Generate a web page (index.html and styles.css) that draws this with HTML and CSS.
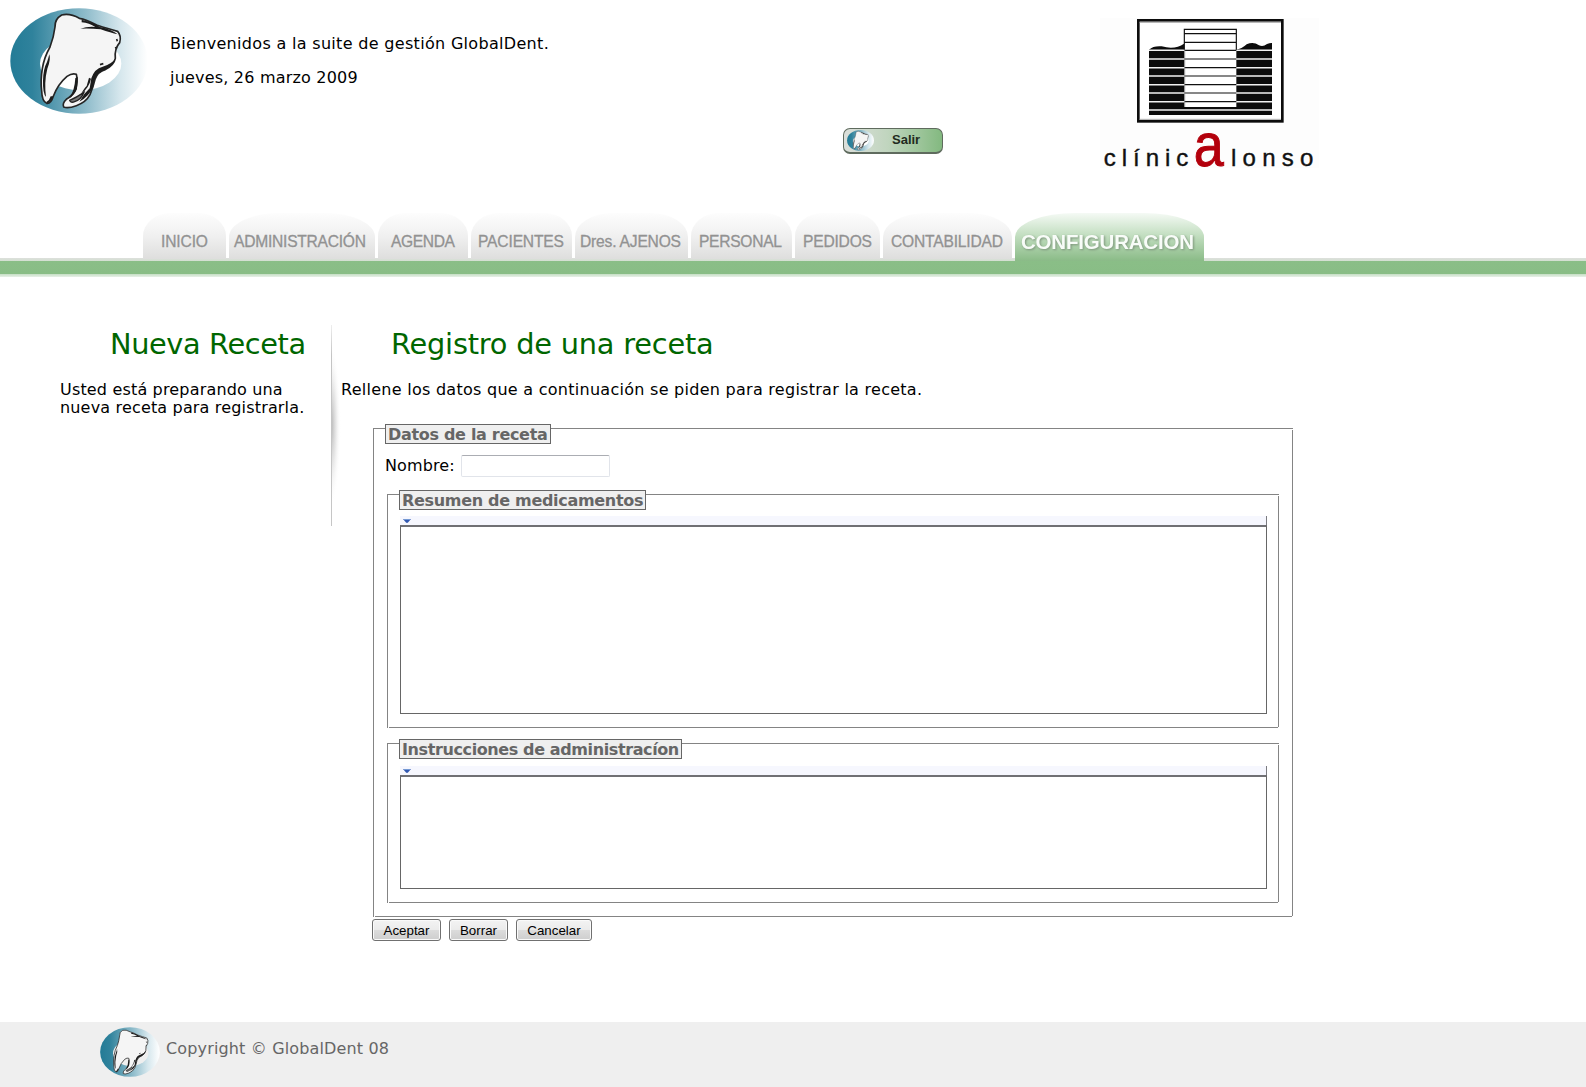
FILE: index.html
```html
<!DOCTYPE html>
<html lang="es">
<head>
<meta charset="utf-8">
<title>GlobalDent - Nueva Receta</title>
<link rel="stylesheet" href="styles.css">
</head>
<body>
<svg class="defs" width="0" height="0" aria-hidden="true">
  <defs>
    <linearGradient id="teal" x1="0" x2="1"><stop offset="0" stop-color="#237b96"/><stop offset=".16" stop-color="#2f829c"/><stop offset=".55" stop-color="#8fbccb"/><stop offset=".8" stop-color="#d6e7ed"/><stop offset="1" stop-color="#fff"/></linearGradient>
    <symbol id="tooth" viewBox="30 23 414 318" preserveAspectRatio="none">
      <ellipse cx="237" cy="182" rx="206" ry="158" fill="url(#teal)"/>
      <ellipse class="hole" cx="242" cy="190" rx="122" ry="80"/>
      <path d="M185 44Q164 56 165 80Q161 112 150 140Q132 172 127 205Q121 240 125 272Q126 303 140 309Q153 311 160 288Q173 252 201 228Q217 217 229 222Q235 244 226 269Q215 288 199 297Q186 309 191 320Q204 325 229 316Q258 306 270 283Q280 259 285 237Q292 214 317 207Q342 194 346 174Q343 145 359 127Q365 107 353 93Q326 86 290 74Q258 57 238 54Q210 38 185 44Z" fill="#f5f5f5" stroke="#252525" stroke-width="5" stroke-linejoin="round"/>
      <path d="M148 162Q153 178 142 205Q132 245 138 290Q128 280 129 240Q130 205 141 185Q145 175 148 162ZM160 288Q155 303 142 309L139 305Q149 300 152 288ZM245 58Q285 68 300 80Q335 87 353 102Q333 98 302 87Q267 83 241 85Q262 78 286 80Q268 68 245 66ZM346 174Q339 203 303 214Q284 222 279 260Q268 288 238 304Q250 281 269 264L274 234Q283 205 308 199Q338 190 346 174ZM267 232L273 235Q268 261 243 281Q253 263 260 257ZM233 230L231 266Q223 285 208 294Q224 271 226 233Z" fill="#1c1c1c"/>
      <path d="M209 300Q228 292 252 276Q244 298 224 304Q212 309 209 300Z" fill="#777" stroke="#222" stroke-width="4"/>
      <path d="M350 116L352 123M300 193L310 190M345 143L351 141" stroke="#222" stroke-width="5"/>
    </symbol>
  </defs>
</svg>

<header class="header">
  <svg class="brand"><use href="#tooth"/></svg>
  <div class="welcome">
    <p class="greeting">Bienvenidos a la suite de gestión GlobalDent.</p>
    <p class="date">jueves, 26 marzo 2009</p>
  </div>
  <a class="exit" href="#"><svg><use href="#tooth"/></svg><span>Salir</span></a>
  <svg class="clinic" viewBox="0 0 657 450">
    <rect width="657" height="450" fill="#fdfdfd"/>
    <rect x="115" y="7" width="432" height="303" fill="#fff" stroke="#0c0c0c" stroke-width="8"/>
    <path d="M119 13H543M119 304H543" stroke="#aaa" stroke-width="3"/>
    <path d="M147 95Q160 83 185 85Q225 96 252 77V291H147ZM408 95Q425 93 440 79Q460 69 477 82Q489 88 501 78Q511 74 516 75V291H408ZM147 266H516V291H147Z" fill="#0c0c0c"/>
    <path d="M147 97H516M147 123H516M147 149H516M147 174H516M147 200H516M147 225H516M147 251H516M147 276H516" stroke="#f2f2f2" stroke-width="4.5"/>
    <path d="M253 34H409V267H253Z" fill="#fff"/>
    <path d="M253 95V34H409V95M253 47H409M253 73H409M253 97H409M253 123H409M253 149H409M253 174H409M253 200H409M253 225H409M253 251H409" fill="none" stroke="#111" stroke-width="3.5"/>
    <path d="M254 95V267" stroke="#888" stroke-width="3"/>
    <text class="word" x="11" y="443" font-size="72" textLength="254">clínic</text>
    <text class="big-a" x="281" y="445" font-size="186" textLength="90" lengthAdjust="spacingAndGlyphs">a</text>
    <text class="word" x="393" y="443" font-size="72" textLength="247">lonso</text>
  </svg>
</header>

<nav class="tabs">
  <a class="tab inicio" href="#"><svg><text x="18" y="34" textLength="47">INICIO</text></svg></a>
  <a class="tab admin" href="#"><svg><text x="5" y="33.5" textLength="132">ADMINISTRACIÓN</text></svg></a>
  <a class="tab agenda" href="#"><svg><text x="13" y="34" textLength="64">AGENDA</text></svg></a>
  <a class="tab pacientes" href="#"><svg><text x="7" y="34" textLength="86">PACIENTES</text></svg></a>
  <a class="tab doctores" href="#"><svg><text x="5" y="34" textLength="101">Dres. AJENOS</text></svg></a>
  <a class="tab personal" href="#"><svg><text x="8" y="34" textLength="83">PERSONAL</text></svg></a>
  <a class="tab pedidos" href="#"><svg><text x="8" y="34" textLength="69">PEDIDOS</text></svg></a>
  <a class="tab contab" href="#"><svg><text x="8" y="34" textLength="112">CONTABILIDAD</text></svg></a>
  <a class="tab config" href="#"><svg><text x="6" y="36" textLength="173">CONFIGURACION</text></svg></a>
</nav>

<main class="content">
  <aside class="side">
    <h1>Nueva Receta</h1>
    <p>Usted está preparando una<br>nueva receta para registrarla.</p>
  </aside>
  <svg class="divider" viewBox="0 0 10 201">
    <defs>
      <radialGradient id="shade" gradientUnits="userSpaceOnUse" cx="0" cy="0" r="1" gradientTransform="translate(0 100) scale(10 82)"><stop offset="0" stop-color="#999" stop-opacity=".75"/><stop offset=".5" stop-color="#bbb" stop-opacity=".35"/><stop offset="1" stop-color="#fff" stop-opacity="0"/></radialGradient>
      <linearGradient id="edge" x2="0" y2="1"><stop offset="0" stop-color="#eee"/><stop offset=".15" stop-color="#c4c4c4"/><stop offset="1" stop-color="#c6c6c6"/></linearGradient>
    </defs>
    <rect width="10" height="201" fill="url(#shade)"/><rect width="1" height="201" fill="url(#edge)"/>
  </svg>
  <section class="main">
    <h1>Registro de una receta</h1>
    <p>Rellene los datos que a continuación se piden para registrar la receta.</p>
    <form>
      <div class="panel outer">
        <div class="legend l1">Datos de la receta</div>
        <label class="name"><span>Nombre:</span><input type="text"></label>
        <div class="panel inner first">
          <div class="legend l2">Resumen de medicamentos</div>
          <div class="bar"><svg viewBox="0 0 8 4"><path d="M0 0H8L5 3.5L4 4L3 3.5Z" fill="#3158b0"/><path d="M1 .5H7" stroke="#7599d4"/></svg></div>
          <div class="area tall"></div>
        </div>
        <div class="panel inner second">
          <div class="legend l3">Instrucciones de administracíon</div>
          <div class="bar"><svg viewBox="0 0 8 4"><path d="M0 0H8L5 3.5L4 4L3 3.5Z" fill="#3158b0"/><path d="M1 .5H7" stroke="#7599d4"/></svg></div>
          <div class="area short"></div>
        </div>
      </div>
      <div class="actions">
        <button class="b1" type="button">Aceptar</button>
        <button class="b2" type="button">Borrar</button>
        <button class="b3" type="button">Cancelar</button>
      </div>
    </form>
  </section>
</main>

<footer class="footer">
  <svg><use href="#tooth"/></svg>
  <span>Copyright © GlobalDent 08</span>
</footer>
</body>
</html>
```
FILE: styles.css
```css
* { box-sizing: border-box; }
body {
  margin: 0;
  height: 1087px;
  display: flex;
  flex-direction: column;
  overflow: hidden;
  background: #fff;
  color: #000;
  font: 16px/18px Verdana, "DejaVu Sans", sans-serif;
}
p, h1 { margin: 0; white-space: nowrap; }
svg { display: block; flex: none; }
.defs { position: absolute; }

.header { display: flex; height: 213px; align-items: flex-start; }
.brand { width: 138px; height: 106px; margin: 8px 0 0 10px; }
.hole { fill: var(--hole, #fff); }
.welcome { width: 673px; margin: 35px 0 0 22px; }
.greeting { letter-spacing: .315px; }
.date { margin-top: 16px; letter-spacing: .2px; }
.exit {
  display: flex;
  align-items: center;
  width: 100px;
  height: 26px;
  margin-top: 128px;
  padding-left: 3px;
  border: 1px solid #5f6b5e;
  border-bottom-width: 2px;
  border-radius: 7px;
  background: linear-gradient(90deg, #dcdfdb, #c0d5be 45%, #83b980);
  color: #222b20;
  font: bold 13px/22px "Liberation Sans", sans-serif;
  text-decoration: none;
}
.exit svg { width: 27px; height: 21px; }
.exit span { margin: -2px 0 0 18px; }
.clinic { width: 219px; height: 150px; margin: 18px 0 0 157px; overflow: visible; font-family: "Liberation Sans", sans-serif; }
.word { fill: #111; stroke: #111; stroke-width: 1.2px; }
.big-a { fill: #b3000c; stroke: #b3000c; stroke-width: 3px; }

.tabs {
  display: flex;
  align-items: flex-start;
  gap: 3px;
  height: 64px;
  padding-left: 143px;
  background: linear-gradient(#fff 45px, #dde0dc 45px, #d3dfd1 48px, #8abe87 48px, #89bd86 61px, #c5dec4 61px, #e7f0e7 64px);
}
.tab {
  height: 46px;
  border-radius: 28px 28px 0 0 / 23px 23px 0 0;
  background: linear-gradient(#fdfdfd, #f0f0f0 50%, #dededd);
  text-decoration: none;
}
.tab svg { width: 100%; height: 46px; }
.tab text { font: 15.6px "Liberation Sans", sans-serif; fill: #929292; stroke: #929292; stroke-width: .3px; }
.inicio { width: 83px; }
.admin { width: 146px; border-radius: 50px 50px 0 0 / 24px 24px 0 0; }
.agenda { width: 90px; }
.pacientes { width: 101px; }
.doctores { width: 113px; border-radius: 38px 38px 0 0 / 24px 24px 0 0; }
.personal { width: 101px; }
.pedidos { width: 85px; }
.contab { width: 129px; border-radius: 44px 44px 0 0 / 24px 24px 0 0; }
.config {
  width: 189px;
  height: 48px;
  border-radius: 60px 60px 0 0 / 24px 24px 0 0;
  background: linear-gradient(#f5faf5, #c4dfc2 45%, #8abb87);
}
.config text { font: bold 20.5px "Liberation Sans", sans-serif; fill: #f8fcf8; stroke: none; filter: drop-shadow(1px 1px 1px #7c947a); }

.content { display: flex; align-items: flex-start; height: 745px; }
.side { width: 271px; margin: 49px 0 0 60px; }
h1 { height: 36px; color: #060; font-size: 28.8px; line-height: 36px; font-weight: normal; letter-spacing: -.2px; }
.side h1 { padding-left: 50px; letter-spacing: -.38px; }
.side p, .main > p { margin-top: 19px; }
.side p { letter-spacing: .17px; }
.main > p { letter-spacing: .27px; }
.divider { width: 10px; height: 201px; margin-top: 48px; }
.main { margin-top: 49px; width: 960px; }
.main h1 { padding-left: 50px; }
form { padding-left: 32px; margin-top: 29px; }

.panel {
  --line: linear-gradient(#848484, #848484);
  background: var(--line) 0 0 / 100% 1px no-repeat, var(--line) 0 0 / 1px 100% no-repeat,
    var(--line) 100% 2px / 1px calc(100% - 3px) no-repeat, var(--line) 2px 100% / calc(100% - 3px) 1px no-repeat;
}
.outer { width: 920px; height: 489px; padding-left: 12px; }
.inner { width: 892px; margin-left: 2px; padding-left: 12px; }
.legend {
  position: relative;
  top: -4px;
  height: 20px;
  padding-left: 2px;
  border: 1px solid #666;
  background: #efefef;
  color: #666;
  font-weight: bold;
  line-height: 20px;
  letter-spacing: -.31px;
  white-space: nowrap;
}
.l1 { width: 166px; }
.l2 { width: 247px; }
.l3 { width: 283px; letter-spacing: -.39px; }
.name { display: flex; height: 22px; margin-top: 7px; line-height: 22px; }
.name span { width: 76px; letter-spacing: .1px; }
input {
  width: 149px;
  height: 22px;
  padding: 0 3px;
  border: 1px solid #e1e4ea;
  border-top-color: #abadb3;
  border-radius: 2px;
}
.first { height: 234px; margin-top: 17px; }
.second { height: 160px; margin-top: 15px; }
.bar { width: 867px; height: 9px; margin: 2px 0 0 1px; padding: 3px 0 0 3px; background: #f6f7fe; border-right: 1px solid #7b7b80; }
.second .bar { margin-top: 3px; }
.bar svg { width: 8px; height: 4px; }
.area { width: 867px; margin-left: 1px; border: 1px solid #666; border-top: 2px solid #707074; background: #fff; }
.tall { height: 189px; }
.short { height: 114px; }
.actions { display: flex; gap: 8px; margin: 2px 0 0 -1px; }
button {
  height: 22px;
  padding: 0;
  border: 1px solid #707070;
  border-radius: 3px;
  background: linear-gradient(#f3f3f3, #ebebeb 48%, #dcdcdc 50%, #cecece);
  box-shadow: inset 0 0 0 1px #fafafa;
  color: #000;
  font: 13.33px "Liberation Sans", sans-serif;
}
.b1 { width: 69px; }
.b2 { width: 59px; }
.b3 { width: 76px; }

.footer { --hole: #efefef; display: flex; height: 65px; padding: 5px 0 0 100px; background: #efefef; color: #666; }
.footer svg { width: 60px; height: 50px; }
.footer span { margin: 13px 0 0 6px; letter-spacing: .15px; }
```
